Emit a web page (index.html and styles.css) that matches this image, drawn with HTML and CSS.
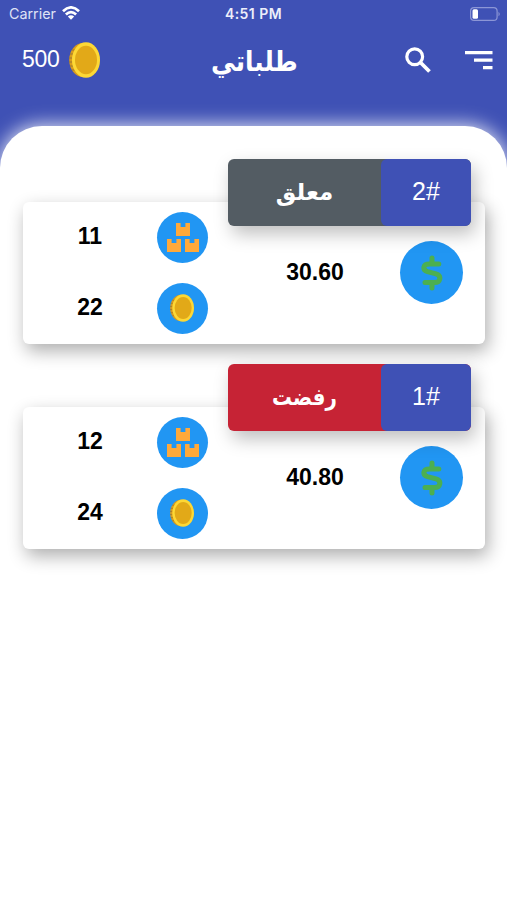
FILE: index.html
```
<!DOCTYPE html>
<html lang="ar">
<head>
<meta charset="utf-8">
<title>طلباتي</title>
<link rel="stylesheet" href="styles.css">
</head>
<body>
<svg class="defs" aria-hidden="true">
  <symbol id="coin" viewBox="0 0 31 36">
    <ellipse cx="14" cy="18" rx="13.8" ry="17" fill="#d99b1c"/>
    <path d="M1 12h3M0 16h3M0 20h3M1 24h3M3 8h3M3 28h3" stroke="#9b7834" stroke-width="1"/>
    <ellipse cx="17" cy="18" rx="14" ry="17.8" fill="#fdd835"/>
    <ellipse cx="17" cy="18" rx="11" ry="14.3" fill="#e2a918"/>
  </symbol>
  <symbol id="boxes" viewBox="0 0 32 29">
    <path fill="#ffa93a" d="M9 0h4.600v4h4.800V0H23v13H9zM0 16h4.600v4h4.800v-4H14v13H0zM18 16h4.600v4h4.800v-4H32v13H18z"/>
  </symbol>
  <symbol id="dollar" viewBox="0 0 22 36">
    <path d="M11 3v4M11 29v4" stroke="#4caf50" stroke-width="5" stroke-linecap="round"/>
    <path d="M17.800 9H8.500C1.500 9 1.300 15 6.500 16.600l8.500 2.300c6 1.900 4.500 8.600-1.500 8.600H4" fill="none" stroke="#4caf50" stroke-width="5" stroke-linecap="round"/>
  </symbol>
</svg>
<header class="top">
  <div class="status">
    <div class="carrier"><span>Carrier</span>
      <svg class="wifi" viewBox="0 0 18 14"><g fill="none" stroke="#fff" stroke-width="2.700"><path d="M1 5.200Q9-2.400 17 5.200M3.900 8.500Q9 3.700 14.100 8.500"/></g><path d="M5.800 10.500Q9 7.900 12.200 10.500L9 13.800z" fill="#fff"/></svg>
    </div>
    <span class="time">4:51 PM</span>
    <svg class="battery" viewBox="0 0 31 14"><rect x=".6" y=".6" width="26.500" height="12.800" rx="3.500" fill="none" stroke="#8c96d6" stroke-width="1.200"/><rect x="2.500" y="2.300" width="5.500" height="9.400" rx="1.500" fill="#fff"/><path d="M28.500 4.700q2.500 2.300 0 4.600z" fill="#8c96d6"/></svg>
  </div>
  <div class="bar">
    <div class="balance"><span>500</span><svg class="coin-lg"><use href="#coin"/></svg></div>
    <h1>طلباتي</h1>
    <div class="actions">
      <svg class="search" viewBox="0 0 26 26"><circle cx="9.700" cy="9.700" r="7.900" fill="none" stroke="#fff" stroke-width="3.200"/><path d="M16 16l8.500 8.500" stroke="#fff" stroke-width="3.800"/></svg>
      <svg class="menu" viewBox="0 0 28 19"><path d="M0 1.700h27.500M9 9.200h18.500M18 16.700h9.500" stroke="#fff" stroke-width="3.200"/></svg>
    </div>
  </div>
</header>
<main class="sheet">
  <section class="card">
    <div class="tag"><span class="state">معلق</span><span class="num">2#</span></div>
    <div class="counts">
      <b>11</b><span class="dot"><svg class="boxes"><use href="#boxes"/></svg></span>
      <b>22</b><span class="dot"><svg class="coin-sm"><use href="#coin"/></svg></span>
    </div>
    <b class="price">30.60</b>
    <span class="dot big"><svg class="dollar"><use href="#dollar"/></svg></span>
  </section>
  <section class="card">
    <div class="tag rejected"><span class="state">رفضت</span><span class="num">1#</span></div>
    <div class="counts">
      <b>12</b><span class="dot"><svg class="boxes"><use href="#boxes"/></svg></span>
      <b>24</b><span class="dot"><svg class="coin-sm"><use href="#coin"/></svg></span>
    </div>
    <b class="price">40.80</b>
    <span class="dot big"><svg class="dollar"><use href="#dollar"/></svg></span>
  </section>
</main>
</body>
</html>
```
FILE: styles.css
```
* { box-sizing: border-box; }
body { margin: 0; height: 900px; overflow: hidden; background: linear-gradient(#3f51b5 0 300px, #fff 300px); font-family: "Liberation Sans", sans-serif; }
svg { display: block; flex: none; }
.defs { position: absolute; width: 0; height: 0; }
.top { height: 126px; color: #fff; }
.status { height: 27px; display: grid; grid-template-columns: 1fr auto 1fr; align-items: center; padding: 0 6px 0 9px; font-family: Inter, sans-serif; font-size: 14px; }
.carrier { display: flex; align-items: center; gap: 6px; color: #dfe2f5; font-size: 14.300px; }
.wifi { width: 18px; height: 14px; margin-top: -1px; }
.time { font-weight: 600; font-size: 14px; letter-spacing: .45px; margin-right: 3px; color: #eceefa; }
.battery { width: 31px; height: 14px; justify-self: end; }
.bar { height: 66px; display: grid; grid-template-columns: 1fr auto 1fr; align-items: center; padding: 0 14px 0 22px; }
.balance { display: flex; align-items: center; gap: 10px; font-size: 23px; }
.balance span { margin-top: -2px; letter-spacing: -.3px; }
.coin-lg { width: 31px; height: 36px; }
h1 { margin: 4px 7px 0 0; font: bold 28px/40px "DejaVu Sans", sans-serif; transform: scaleX(.88); }
.actions { display: flex; justify-content: flex-end; align-items: center; gap: 34px; }
.search { width: 26px; height: 26px; }
.menu { width: 28px; height: 19px; margin-top: 1px; }
.sheet { height: 774px; padding: 76px 22px 0 23px; display: flex; flex-direction: column; gap: 63px; background: #fff; border-radius: 42px 42px 0 0; box-shadow: 0 0 18px 2px rgba(255, 255, 255, .8); }
.card { position: relative; height: 142px; display: grid; grid-template-columns: 185px 1fr 63px; padding-right: 22px; align-items: center; background: #fff; border-radius: 6px; box-shadow: 3px 7px 18px rgba(0, 0, 0, .32); }
.counts { display: grid; grid-template-columns: 134px 51px; row-gap: 20px; align-items: center; margin-top: -1px; }
b { font-size: 23px; text-align: center; }
.price { padding-left: 22px; margin-top: -2px; }
.counts b { margin-top: -1px; }
.dot { width: 51px; height: 51px; border-radius: 50%; background: #2196f3; display: flex; align-items: center; justify-content: center; }
.big { width: 63px; height: 63px; margin-top: -1px; }
.boxes { width: 32px; height: 29px; }
.coin-sm { width: 24px; height: 28px; margin-right: 1px; }
.dollar { width: 22px; height: 36px; }
.tag { position: absolute; top: -43px; right: 14px; width: 243px; height: 67px; display: flex; border-radius: 6px; background: #535c63; color: #fff; box-shadow: 4px 8px 18px rgba(0, 0, 0, .25); }
.rejected { background: #c62335; }
.state { flex: 1; text-align: center; font: bold 23px/67px "DejaVu Sans", sans-serif; }
.rejected .state { transform: scaleX(.86); }
.num { width: 90px; border-radius: 6px; background: #3f51b5; text-align: center; font-size: 25px; line-height: 65px; }
```
